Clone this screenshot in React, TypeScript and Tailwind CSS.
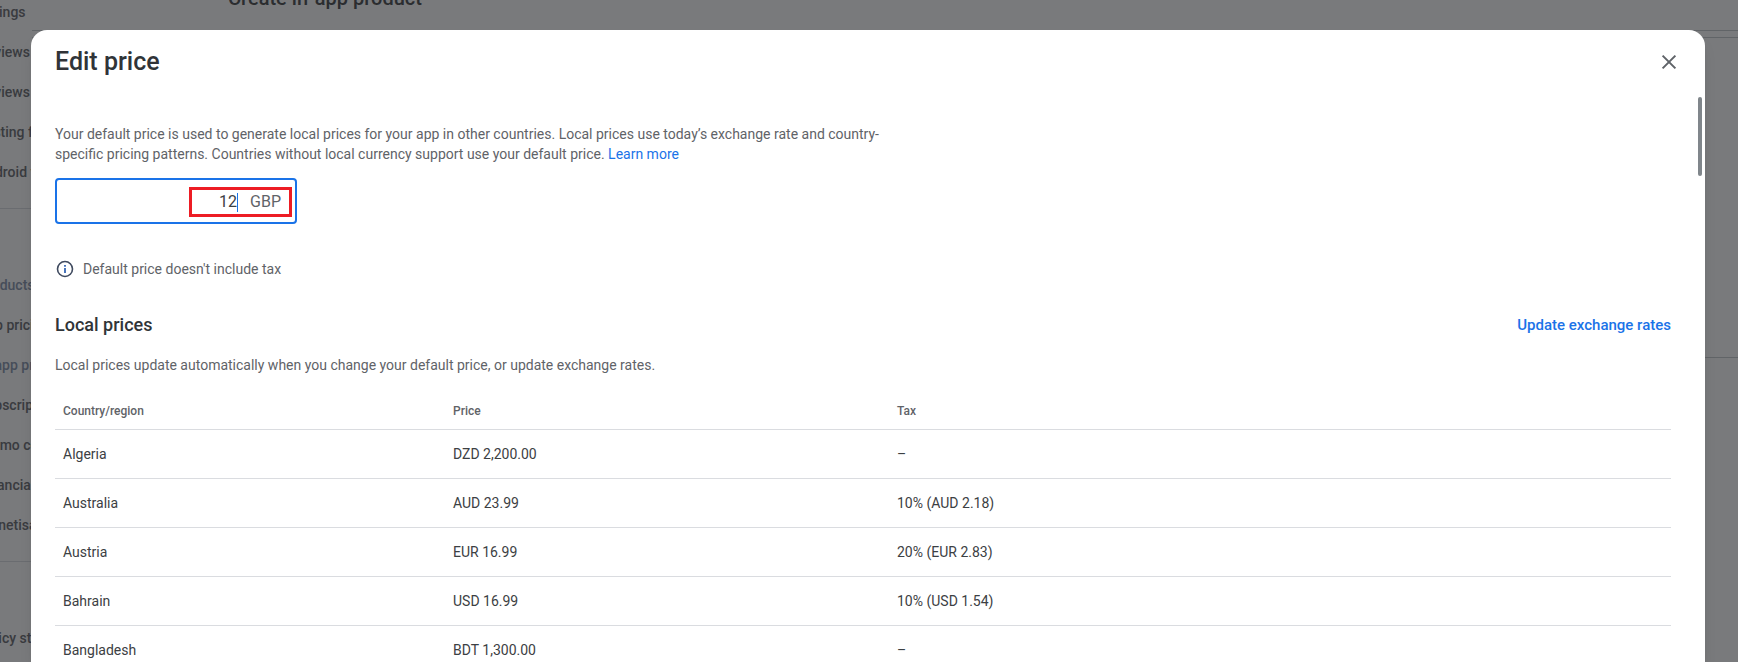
import { useState } from "react";

type LocalPrice = {
  country: string;
  price: string;
  tax?: string;
};

const localPrices: LocalPrice[] = [
  { country: "Algeria", price: "DZD 2,200.00" },
  { country: "Australia", price: "AUD 23.99", tax: "10% (AUD 2.18)" },
  { country: "Austria", price: "EUR 16.99", tax: "20% (EUR 2.83)" },
  { country: "Bahrain", price: "USD 16.99", tax: "10% (USD 1.54)" },
  { country: "Bangladesh", price: "BDT 1,300.00" },
];

const navGroups = [
  {
    className: "pb-4",
    items: ["Ratings", "Reviews", "Reviews analysis", "Testing feedback", "Android vitals"],
  },
  {
    className: "border-t border-[#dadce0] pt-14 pb-4",
    items: [
      "Products",
      "App pricing",
      "In-app products",
      "Subscriptions",
      "Promo codes",
      "Financial reports",
      "Monetisation setup",
    ],
  },
  { className: "border-t border-[#dadce0] pt-14", items: ["Policy status"] },
];

const activeItems = ["Products", "In-app products"];

function Sidebar() {
  return (
    <nav className="-mt-2 w-8 shrink-0 overflow-hidden text-sm font-medium text-[#5f6368]">
      {navGroups.map((group) => (
        <ul key={group.items[0]} className={group.className}>
          {group.items.map((item) => (
            <li key={item} className="-ml-[22px] flex h-10 items-center whitespace-nowrap">
              <a href="#" className={activeItems.includes(item) ? "text-[#7f8fa9]" : ""}>
                {item}
              </a>
            </li>
          ))}
        </ul>
      ))}
    </nav>
  );
}

function InfoIcon() {
  return (
    <svg className="size-5" viewBox="0 0 20 20" fill="none" aria-hidden="true">
      <circle cx="10" cy="10" r="7.5" stroke="#3f4a5f" strokeWidth="1.6" />
      <path d="M10 9v5M10 6v1.7" stroke="#2a5db0" strokeWidth="1.7" />
    </svg>
  );
}

function CloseIcon() {
  return (
    <svg className="size-6" viewBox="0 0 24 24" fill="none" aria-hidden="true">
      <path d="M5.6 5.6l12.8 12.8M18.4 5.6L5.6 18.4" stroke="#5f6368" strokeWidth="2" />
    </svg>
  );
}

function PriceTable() {
  return (
    <table className="w-full table-fixed text-left text-sm text-[#3c4043]">
      <thead className="text-xs text-[#5f6368]">
        <tr className="h-9 border-b border-[#dadce0]">
          <th className="w-[390px] px-2 font-medium">Country/region</th>
          <th className="w-[444px] px-2 font-medium">Price</th>
          <th className="px-2 font-medium">Tax</th>
        </tr>
      </thead>
      <tbody>
        {localPrices.map((row) => (
          <tr key={row.country} className="h-[49px] border-b border-[#dadce0]">
            <td className="px-2">{row.country}</td>
            <td className="px-2">{row.price}</td>
            <td className="px-2">{row.tax ?? "–"}</td>
          </tr>
        ))}
      </tbody>
    </table>
  );
}

function EditPriceDialog() {
  const [price, setPrice] = useState("12");

  return (
    <div
      role="dialog"
      aria-labelledby="dialog-title"
      className="relative h-full overflow-hidden rounded-t-2xl bg-white pr-[34px] pl-6 shadow-lg"
    >
      <header className="flex h-16 items-center justify-between">
        <h1 id="dialog-title" className="text-[25px] font-medium text-[#303438]">
          Edit price
        </h1>
        <button type="button" aria-label="Close" className="-mr-[10px]">
          <CloseIcon />
        </button>
      </header>

      <p className="mt-[30px] max-w-[860px] text-sm leading-5 text-[#5f6368]">
        Your default price is used to generate local prices for your app in other countries. Local
        prices use today’s exchange rate and country-specific pricing patterns. Countries without
        local currency support use your default price.{" "}
        <a href="#" className="text-[#1a73e8]">
          Learn more
        </a>
      </p>

      <div className="mt-[14px] flex h-[46px] w-[242px] items-center justify-end rounded border-2 border-[#1a73e8] pt-0.5 pr-[3px]">
        <label className="flex h-[30px] w-[103px] items-center justify-end border-3 border-[#ed1c24] pr-2 text-base text-[#5f6368]">
          <input
            aria-label="Default price"
            value={price}
            onChange={(e) => setPrice(e.target.value)}
            className="w-10 text-right text-[#3c4043] outline-none"
          />
          <span className="mr-3 h-[19px] w-px bg-[#1a73e8]" />
          GBP
        </label>
      </div>

      <div className="mt-[35px] flex items-center gap-2 text-sm leading-5 text-[#5f6368]">
        <InfoIcon />
        Default price doesn't include tax
      </div>

      <div className="mt-8 flex items-center justify-between">
        <h2 className="text-lg font-medium text-[#303438]">Local prices</h2>
        <button type="button" className="text-[15px] font-medium text-[#1a73e8]">
          Update exchange rates
        </button>
      </div>
      <p className="mt-4 mb-[18px] text-sm leading-5 text-[#5f6368]">
        Local prices update automatically when you change your default price, or update exchange
        rates.
      </p>
      <PriceTable />

      <div className="absolute top-[67px] right-[3px] h-[79px] w-1 rounded-full bg-[#80868b]" />
    </div>
  );
}

export default function App() {
  return (
    <div className="relative h-screen overflow-hidden bg-white font-['Roboto',sans-serif]">
      <div className="flex h-full">
        <Sidebar />
        <main className="min-w-0 flex-1 overflow-hidden">
          <div className="flex h-[31px] items-start border-b border-[#c4c7cb] pl-[196px]">
            <p className="-mt-4 text-xl font-medium text-[#3c4043]">Create in-app product</p>
          </div>
          <div className="mt-[6px] h-[321px] border-y border-[#c4c7cb]" />
        </main>
      </div>
      <div className="absolute inset-0 bg-[#202124]/60 pt-[30px] pr-[33px] pl-[31px]">
        <EditPriceDialog />
      </div>
    </div>
  );
}
